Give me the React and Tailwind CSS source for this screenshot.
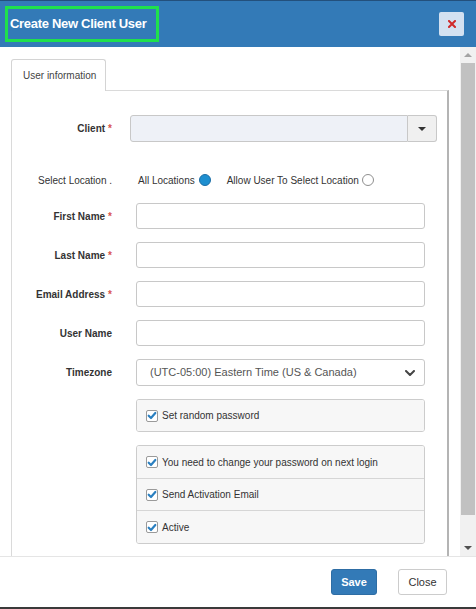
import React from "react";

const Label = ({ children, required, bold = true }) => (
  <div className={`w-[100px] shrink-0 text-right text-[10px] text-[#333] ${bold ? "font-bold" : ""}`}>
    {children}
    {required && <span className="ml-[3px] text-[#d9534f]">*</span>}
  </div>
);

const TextRow = ({ label, required }) => (
  <div className="flex items-center">
    <Label required={required}>{label}</Label>
    <input
      type="text"
      className="ml-[24px] h-[26px] w-[289px] rounded-[3px] border border-[#c8c8c8] bg-white px-2 text-[11px] outline-none"
    />
  </div>
);

const Check = () => (
  <span className="flex h-[12px] w-[12px] shrink-0 items-center justify-center rounded-[2px] border border-[#9a9a9a] bg-white">
    <svg viewBox="0 0 12 12" className="h-[11px] w-[11px]">
      <path d="M2 6.2 L4.8 9 L10 3" fill="none" stroke="#2a7fc0" strokeWidth="2.6" strokeLinecap="round" strokeLinejoin="round" />
    </svg>
  </span>
);

const CheckItem = ({ text, last, h = "h-[32px]" }) => (
  <div className={`flex ${h} items-center gap-[4px] bg-[#f7f7f7] pl-[9px] text-[10px] text-[#333] ${last ? "" : "border-b border-[#d6d6d6]"}`}>
    <Check />
    <span>{text}</span>
  </div>
);

const App = () => {
  return (
    <div className="flex h-[609px] w-[476px] flex-col overflow-hidden bg-white font-['Liberation_Sans',Arial,sans-serif]">
      {/* header */}
      <div className="flex h-[47px] shrink-0 items-center border-t border-t-[#23507c] bg-[#337ab7]">
        <div className="ml-[5px] flex h-[36px] w-[154px] items-center border-[3px] border-[#1fe04b] pl-[2px]">
          <span className="text-[13px] font-bold tracking-[-0.3px] text-white">Create New Client User</span>
        </div>
        <button className="ml-auto mr-[12px] flex h-[24px] w-[25px] items-center justify-center rounded-[2px] bg-[#d3e1f1]">
          <svg viewBox="0 0 8 8" className="h-[8px] w-[8px]">
            <path d="M1 1 L7 7 M7 1 L1 7" stroke="#cf2a2a" strokeWidth="2" strokeLinecap="square" />
          </svg>
        </button>
      </div>

      {/* body */}
      <div className="flex min-h-0 flex-1">
        <div className="flex min-w-0 flex-1 flex-col pl-[11px] pr-[11px] pt-[12px]">
          <div className="relative z-10 -mb-px flex h-[32px] w-[95px] items-center rounded-t-[3px] border border-b-0 border-[#d4d4d4] bg-white pl-[11px] text-[10px] text-[#444]">
            User information
          </div>
          <div className="flex flex-1 flex-col border-l border-t border-r-2 border-l-[#dadada] border-t-[#dadada] border-r-[#b4b4b4] pt-[24px]">
            {/* client */}
            <div className="flex items-center">
              <Label required>Client</Label>
              <div className="ml-[18px] flex h-[27px] w-[307px]">
                <div className="flex-1 rounded-l-[3px] border border-[#c8c8c8] bg-[#eef1f7]" />
                <div className="flex w-[29px] items-center justify-center rounded-r-[3px] border border-l-0 border-[#c8c8c8] bg-[#f0f0f0]">
                  <svg viewBox="0 0 8 4" className="h-[4px] w-[8px]">
                    <path d="M0 0 L8 0 L4 4 Z" fill="#333" />
                  </svg>
                </div>
              </div>
            </div>

            {/* location */}
            <div className="mt-[29px] flex h-[18px] items-center text-[10px] text-[#333]">
              <Label bold={false}>Select Location .</Label>
              <span className="ml-[26px]">All Locations</span>
              <span className="ml-[4px] flex h-[12px] w-[12px] items-center justify-center rounded-full border border-[#1c6ea6] bg-[#1e8fd0]" />
              <span className="ml-[16px]">Allow User To Select Location</span>
              <span className="ml-[3px] h-[12px] w-[12px] rounded-full border border-[#8f8f8f] bg-white" />
            </div>

            <div className="mt-[14px] flex flex-col gap-[13px]">
              <TextRow label="First Name" required />
              <TextRow label="Last Name" required />
              <TextRow label="Email Address" required />
              <TextRow label="User Name" />
              <div className="flex items-center">
                <Label>Timezone</Label>
                <div className="ml-[24px] flex h-[27px] w-[289px] items-center justify-between rounded-[3px] border border-[#c8c8c8] bg-white pl-[13px] pr-[9px] text-[11px] text-[#555]">
                  <span>(UTC-05:00) Eastern Time (US &amp; Canada)</span>
                  <svg viewBox="0 0 10 6" className="h-[6px] w-[10px]">
                    <path d="M1 1 L5 5 L9 1" fill="none" stroke="#444" strokeWidth="2" strokeLinecap="round" strokeLinejoin="round" />
                  </svg>
                </div>
              </div>
              <div className="flex">
                <div className="w-[100px] shrink-0" />
                <div className="ml-[24px] w-[289px] overflow-hidden rounded-[3px] border border-[#cccccc]">
                  <CheckItem text="Set random password" last h="h-[31px]" />
                </div>
              </div>
              <div className="flex">
                <div className="w-[100px] shrink-0" />
                <div className="ml-[24px] w-[289px] overflow-hidden rounded-[3px] border border-[#cccccc]">
                  <CheckItem text="You need to change your password on next login" h="h-[33px]" />
                  <CheckItem text="Send Activation Email" />
                  <CheckItem text="Active" last />
                </div>
              </div>
            </div>
          </div>
        </div>

        {/* scrollbar */}
        <div className="flex w-[16px] shrink-0 flex-col bg-[#f1f1f1] px-[1px]">
          <div className="flex h-[16px] items-center justify-center">
            <svg viewBox="0 0 8 4" className="h-[4px] w-[8px]">
              <path d="M4 0 L8 4 L0 4 Z" fill="#a3a3a3" />
            </svg>
          </div>
          <div className="h-[452px] bg-[#c1c1c1]" />
          <div className="flex-1" />
          <div className="flex h-[16px] items-center justify-center">
            <svg viewBox="0 0 8 4" className="h-[4px] w-[8px]">
              <path d="M0 0 L8 0 L4 4 Z" fill="#505050" />
            </svg>
          </div>
        </div>
      </div>

      {/* footer */}
      <div className="flex h-[53px] shrink-0 items-center justify-end gap-[21px] border-t border-t-[#e5e5e5] border-b-2 border-b-[#3a3a3a] pr-[29px]">
        <button className="h-[26px] w-[46px] rounded-[3px] border border-[#2e6da4] bg-[#337ab7] text-[11px] font-bold text-white">
          Save
        </button>
        <button className="h-[26px] w-[49px] rounded-[3px] border border-[#cccccc] bg-white text-[11px] text-[#333]">
          Close
        </button>
      </div>
    </div>
  );
};

export default App;
